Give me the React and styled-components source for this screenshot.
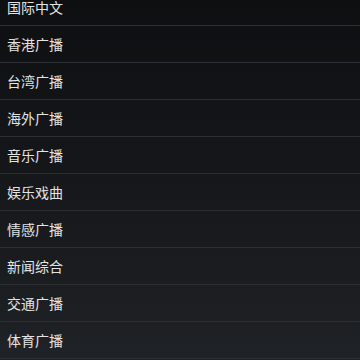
import styled, { createGlobalStyle } from 'styled-components';

const channels = [
  '国际中文',
  '香港广播',
  '台湾广播',
  '海外广播',
  '音乐广播',
  '娱乐戏曲',
  '情感广播',
  '新闻综合',
  '交通广播',
  '体育广播'
];

const GlobalStyle = createGlobalStyle`
  html, body {
    margin: 0;
    padding: 0;
    height: 100%;
    overflow: hidden;
  }
  body {
    background: linear-gradient(to bottom, #0e0f11 0%, #15171a 50%, #1f2226 100%);
    font-family: "Noto Sans CJK SC", "Noto Sans", sans-serif;
  }
`;

const Screen = styled.div`
  width: 360px;
  height: 360px;
  overflow: hidden;
`;

const List = styled.ul`
  list-style: none;
  margin: -11px 0 0;
  padding: 0;
`;

const Row = styled.li`
  height: 36px;
  display: flex;
  align-items: center;
  padding-left: 7px;
  border-bottom: 1px solid #2b2e32;
  color: #e4e4e4;
  font-size: 14px;
`;

export default function App() {
  return (
    <Screen>
      <GlobalStyle />
      <List>
        {channels.map((name) => (
          <Row key={name}>{name}</Row>
        ))}
      </List>
    </Screen>
  );
}
